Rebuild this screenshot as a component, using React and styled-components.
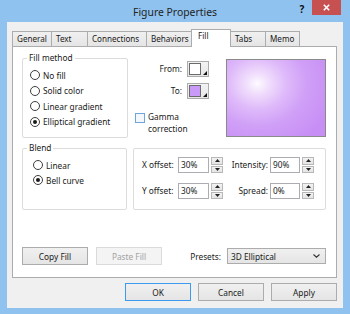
import React from 'react';
import styled, { createGlobalStyle, css } from 'styled-components';

const Global = createGlobalStyle`
  html, body { margin: 0; padding: 0; }
  body {
    width: 350px; height: 314px; overflow: hidden;
    font-family: "Noto Sans", "Open Sans", sans-serif;
    font-size: 8.3px; color: #1a1a1a;
  }
  *, *::before, *::after { box-sizing: border-box; }
`;

const Window = styled.div`
  width: 350px; height: 314px;
  background: #90c2ef;
  display: flex; flex-direction: column;
  padding: 0 7px 6px 7px;
`;

const TitleBar = styled.div`
  height: 22px;
  display: grid;
  grid-template-columns: 1fr auto 1fr;
  align-items: start;
`;

const Title = styled.div`
  grid-column: 2;
  font-size: 10.4px;
  line-height: 22px;
  padding-top: 1px;
  color: #222;
  white-space: nowrap;
`;

const Caption = styled.div`
  grid-column: 3;
  justify-self: end;
  display: flex;
  align-items: flex-start;
  margin-right: 2px;
`;

const HelpBtn = styled.div`
  width: 12px; height: 15px;
  margin-right: 4px;
  font-weight: bold; font-size: 10px;
  line-height: 19px; text-align: center;
  color: #111;
`;

const CloseBtn = styled.div`
  width: 29px; height: 15px;
  background: #c75050;
  display: flex; align-items: center; justify-content: center;
`;

const Client = styled.div`
  flex: 1;
  background: #f0f0f0;
  display: flex; flex-direction: column;
  padding: 0 6px 7px 5px;
`;

const TabStrip = styled.div`
  height: 24px;
  display: flex;
  align-items: flex-end;
`;

const Tab = styled.div`
  width: ${p => p.$w}px;
  height: 15px;
  margin-left: -1px;
  &:first-child { margin-left: 0; }
  border: 1px solid #acacac;
  border-bottom: none;
  background: linear-gradient(#f0f0f0, #e5e5e5);
  padding-left: 4px;
  line-height: 14px;
  font-size: 8.1px;
  white-space: nowrap;
  overflow: hidden;
  ${p => p.$active && css`
    height: 18px;
    margin-bottom: -1px;
    background: #fff;
    padding-left: 6px;
    line-height: 12px;
    position: relative;
    z-index: 2;
  `}
`;

const Panel = styled.div`
  flex: 1;
  background: #fff;
  border: 1px solid #acacac;
  display: flex; flex-direction: column;
  padding: 5px 10px 12px 9px;
`;

const TopRow = styled.div`
  display: flex;
  align-items: flex-start;
  height: 86px;
`;

const Group = styled.fieldset`
  margin: 0; padding: 0; min-width: 0;
  border: 1px solid #dcdcdc;
  border-radius: 2px;
  width: ${p => p.$w}px;
  height: ${p => p.$h}px;
  flex: none;
`;

const Legend = styled.legend`
  padding: 0 2px;
  margin-left: 4px;
  line-height: 12px;
`;

const RadioList = styled.div`
  display: flex; flex-direction: column;
  gap: ${p => p.$gap}px;
  padding: 5px 0 0 ${p => p.$pl}px;
`;

const RadioRow = styled.div`
  display: flex; align-items: center; gap: 3px;
  height: 12px;
  white-space: nowrap;
`;

const RadioDot = styled.span`
  width: 10px; height: 10px; flex: none;
  border-radius: 50%;
  border: 1px solid #3d3d3d;
  background: #fff;
  display: flex; align-items: center; justify-content: center;
  &::after {
    content: '';
    width: 4px; height: 4px; border-radius: 50%;
    background: #1a1a1a;
    display: ${p => (p.$on ? 'block' : 'none')};
  }
`;

const ColorCol = styled.div`
  margin: 9px 0 0 7px;
  display: grid;
  grid-template-columns: 47px 22px;
  column-gap: 5px;
  row-gap: 6px;
  align-items: center;
`;

const FieldLabel = styled.span`
  justify-self: end;
  white-space: nowrap;
  line-height: 12px;
`;

const SwatchBtn = styled.div`
  width: 22px; height: 16px;
  border: 1px solid #acacac;
  background: linear-gradient(#f3f3f3, #e6e6e6);
  padding: 1px;
  position: relative;
`;

const SwatchInner = styled.div`
  width: 12px; height: 12px;
  border: 1px solid #6b6b6b;
  background: ${p => p.$c};
`;

const Corner = styled.svg`
  position: absolute;
  right: 1px; bottom: 1px;
`;

const GammaRow = styled.div`
  grid-column: 1 / -1;
  display: flex; align-items: flex-start; gap: 3px;
  margin-top: 6px;
  line-height: 12px;
`;

const CheckBox = styled.span`
  width: 10px; height: 10px; flex: none;
  margin-top: 2px;
  border: 1px solid #6ea6dc;
  background: #f4f8fc;
`;

const Preview = styled.div`
  margin: 7px 0 0 auto;
  width: 100px; height: 78px;
  border: 1px solid #8a8a8a;
  background: radial-gradient(ellipse 80% 90% at 31% 31%, #fdfbff 0%, #f1dffc 14%, #deb9fa 38%, #d0a0f7 62%, #c78ef5 100%);
`;

const MidRow = styled.div`
  margin-top: 4px;
  display: flex;
  align-items: flex-end;
  gap: 6px;
`;

const Offsets = styled.div`
  width: 197px; height: 62px;
  border: 1px solid #dcdcdc;
  border-radius: 2px;
  padding: 8px 11px 0 8px;
  display: grid;
  grid-template-columns: 34px 31px 12px 1fr 30px 12px;
  column-gap: 2px;
  row-gap: 10px;
  align-items: center;
  align-content: start;
`;

const OffLabel = styled.span`
  white-space: nowrap;
  line-height: 12px;
  justify-self: ${p => (p.$right ? 'end' : 'start')};
`;

const TextBox = styled.div`
  height: 16px;
  border: 1px solid #abadb3;
  background: #fff;
  padding-left: 2px;
  line-height: 14px;
`;

const Spinner = styled.div`
  height: 16px;
  display: flex; flex-direction: column; gap: 1px;
`;

const SpinHalf = styled.div`
  flex: 1;
  border: 1px solid #b8b8b8;
  background: linear-gradient(#f3f3f3, #e4e4e4);
  display: flex; align-items: center; justify-content: center;
`;

const BottomRow = styled.div`
  margin-top: auto;
  display: flex;
  align-items: center;
`;

const Button = styled.div`
  width: ${p => p.$w}px;
  height: 18px;
  border: 1px solid #acacac;
  background: linear-gradient(#f0f0f0, #e5e5e5);
  display: flex; align-items: center; justify-content: center;
  white-space: nowrap;
  margin-right: ${p => p.$mr || 0}px;
  ${p => p.$disabled && css`
    background: #f4f4f4;
    border-color: #dadada;
    color: #a3a3a3;
  `}
  ${p => p.$default && css`
    border-color: #3c9af0;
  `}
`;

const PresetsLabel = styled.span`
  margin: 0 6px 0 auto;
  white-space: nowrap;
`;

const Select = styled.div`
  width: 99px; height: 16px;
  border: 1px solid #acacac;
  background: linear-gradient(#f0f0f0, #e5e5e5);
  display: flex; align-items: center; justify-content: space-between;
  padding: 0 5px 0 3px;
  white-space: nowrap;
`;

const ButtonRow = styled.div`
  display: flex;
  justify-content: flex-end;
  gap: 7px;
  padding-top: 5px;
`;

const Tri = ({ up }) => (
  <svg width="5" height="3" viewBox="0 0 5 3">
    <path d={up ? 'M0 3 L2.5 0 L5 3 Z' : 'M0 0 L5 0 L2.5 3 Z'} fill="#222" />
  </svg>
);

const Spin = () => (
  <Spinner>
    <SpinHalf><Tri up /></SpinHalf>
    <SpinHalf><Tri /></SpinHalf>
  </Spinner>
);

const Swatch = ({ color }) => (
  <SwatchBtn>
    <SwatchInner $c={color} />
    <Corner width="4" height="4" viewBox="0 0 4 4">
      <path d="M4 0 L4 4 L0 4 Z" fill="#111" />
    </Corner>
  </SwatchBtn>
);

const Radio = ({ on, children }) => (
  <RadioRow>
    <RadioDot $on={on} />
    <span>{children}</span>
  </RadioRow>
);

const tabs = [
  ['General', 40],
  ['Text', 37],
  ['Connections', 60],
  ['Behaviors', 46],
  ['Fill', 40, true],
  ['Tabs', 36],
  ['Memo', 35],
];

export default function App() {
  return (
    <>
      <Global />
      <Window>
        <TitleBar>
          <Title>Figure Properties</Title>
          <Caption>
            <HelpBtn>?</HelpBtn>
            <CloseBtn>
              <svg width="7" height="7" viewBox="0 0 7 7">
                <path d="M0.8 0.8 L6.2 6.2 M6.2 0.8 L0.8 6.2" stroke="#fff" strokeWidth="1.6" />
              </svg>
            </CloseBtn>
          </Caption>
        </TitleBar>
        <Client>
          <TabStrip>
            {tabs.map(([t, w, a]) => (
              <Tab key={t} $w={w} $active={a}>{t}</Tab>
            ))}
          </TabStrip>
          <Panel>
            <TopRow>
              <Group $w={106} $h={86}>
                <Legend>Fill method</Legend>
                <RadioList $pl={7} $gap={3.5}>
                  <Radio>No fill</Radio>
                  <Radio>Solid color</Radio>
                  <Radio>Linear gradient</Radio>
                  <Radio on>Elliptical gradient</Radio>
                </RadioList>
              </Group>
              <ColorCol>
                <FieldLabel>From:</FieldLabel>
                <Swatch color="#ffffff" />
                <FieldLabel>To:</FieldLabel>
                <Swatch color="#c99af7" />
                <GammaRow>
                  <CheckBox />
                  <span>Gamma<br />correction</span>
                </GammaRow>
              </ColorCol>
              <Preview />
            </TopRow>
            <MidRow>
              <Group $w={105} $h={68}>
                <Legend>Blend</Legend>
                <RadioList $pl={10} $gap={3}>
                  <Radio>Linear</Radio>
                  <Radio on>Bell curve</Radio>
                </RadioList>
              </Group>
              <Offsets>
                <OffLabel>X offset:</OffLabel>
                <TextBox>30%</TextBox>
                <Spin />
                <OffLabel $right>Intensity:</OffLabel>
                <TextBox>90%</TextBox>
                <Spin />
                <OffLabel>Y offset:</OffLabel>
                <TextBox>30%</TextBox>
                <Spin />
                <OffLabel $right>Spread:</OffLabel>
                <TextBox>0%</TextBox>
                <Spin />
              </Offsets>
            </MidRow>
            <BottomRow>
              <Button $w={66} $mr={8}>Copy Fill</Button>
              <Button $w={66} $disabled>Paste Fill</Button>
              <PresetsLabel>Presets:</PresetsLabel>
              <Select>
                <span>3D Elliptical</span>
                <svg width="7" height="4" viewBox="0 0 7 4">
                  <path d="M0.5 0.5 L3.5 3.2 L6.5 0.5" stroke="#333" strokeWidth="1.1" fill="none" />
                </svg>
              </Select>
            </BottomRow>
          </Panel>
          <ButtonRow>
            <Button $w={66} $default>OK</Button>
            <Button $w={66}>Cancel</Button>
            <Button $w={66}>Apply</Button>
          </ButtonRow>
        </Client>
      </Window>
    </>
  );
}
